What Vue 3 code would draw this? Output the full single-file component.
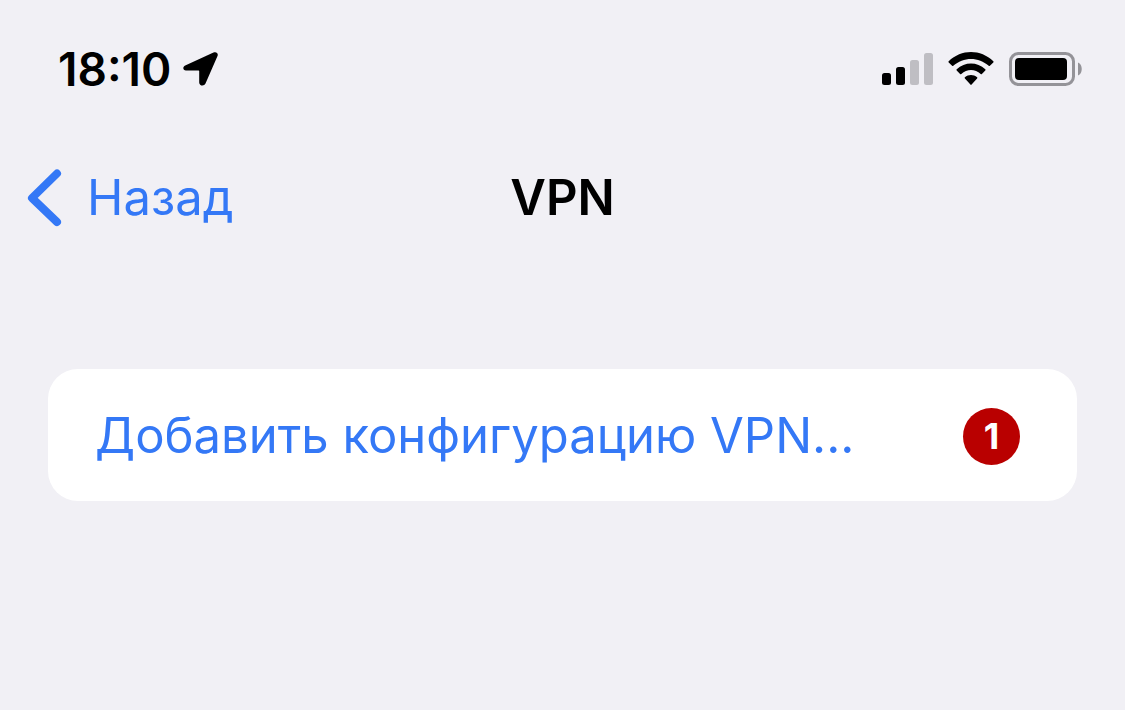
<script setup>
const bars = [
  { x: 0, y: 20, height: 12, on: true },
  { x: 14, y: 14, height: 18, on: true },
  { x: 28, y: 7, height: 25, on: false },
  { x: 42, y: 0, height: 32, on: false },
]
const configurations = [{ label: 'Добавить конфигурацию VPN...', badge: 1 }]
</script>

<template>
  <div class="screen">
    <div class="status">
      <div class="clock">
        <time>18:10</time>
        <svg class="location" width="36" height="36" viewBox="0 0 36 36" aria-hidden="true">
          <path d="M2.200 14.600 30.500 1.500c2.700-1.200 5.100.8 4 3.500L22.500 32.600c-1.300 3-6.300 2.500-6.300-1.200V20q0-.6-.6-.6H3C-.2 19.400-.6 15.900 2.200 14.600Z" />
        </svg>
      </div>
      <div class="indicators">
        <svg width="51" height="36" viewBox="0 -2 51 36" aria-hidden="true">
          <rect
            v-for="bar in bars"
            :key="bar.x"
            :class="{ dim: !bar.on }"
            :x="bar.x"
            :y="bar.y"
            width="9"
            :height="bar.height"
            rx="2.500"
          />
        </svg>
        <svg width="46" height="36" viewBox="0 0 46 36" aria-hidden="true">
          <path d="M.7 10.200C13.200-2.200 32.800-2.200 45.300 10.200q.6.600 0 1.200l-3.400 3.400q-.6.600-1.200 0C30.700 5.600 15.300 5.600 5.300 14.800q-.6.600-1.200 0L.7 11.400q-.6-.6 0-1.200Z" />
          <path d="M8.700 18.300C16.800 10.500 29.200 10.500 37.300 18.300q.6.600 0 1.200l-3.400 3.400q-.6.600-1.200 0C27 17.700 19 17.700 13.300 22.900q-.6.600-1.200 0l-3.400-3.400q-.6-.6 0-1.200Z" />
          <path d="M16.900 26.200C20.400 23.100 25.600 23.100 29.100 26.200q.6.600 0 1.200L23.600 33.600q-.6.600-1.200 0L16.900 27.400q-.6-.6 0-1.200Z" />
        </svg>
        <svg width="74" height="36" viewBox="0 0 74 36" aria-hidden="true">
          <rect class="shell" x="1.500" y="2.500" width="63" height="31" rx="8" />
          <rect x="6" y="7" width="52" height="22" rx="4" />
          <path class="cap" d="M69 11.500c5 2 5 11 0 13Z" />
        </svg>
      </div>
    </div>

    <header class="navbar">
      <a class="back" href="#">
        <svg width="36" height="58" viewBox="0 0 36 58" aria-hidden="true">
          <path d="M31 4.500 6 29l25 24" />
        </svg>
        <span>Назад</span>
      </a>
      <h1>VPN</h1>
    </header>

    <main>
      <button v-for="item in configurations" :key="item.label" class="row" type="button">
        <span>{{ item.label }}</span>
        <span class="badge">{{ item.badge }}</span>
      </button>
    </main>
  </div>
</template>

<style>
body {
  margin: 0;
  background: #f1f0f5;
}
</style>

<style scoped>
.screen {
  min-height: 100vh;
  box-sizing: border-box;
  padding-top: 39px;
  background: #f1f0f5;
  color: #000;
  font-family: Inter, "Liberation Sans", sans-serif;
}
svg {
  display: block;
  flex: none;
}
.status {
  display: flex;
  align-items: center;
  justify-content: space-between;
  height: 60px;
  padding: 0 42px 0 58px;
}
.clock {
  display: flex;
  align-items: center;
  gap: 12px;
  font-size: 46px;
  line-height: 60px;
  font-weight: 600;
}
.indicators {
  display: flex;
  align-items: center;
  gap: 15px;
}
.dim {
  fill: #bfbec3;
}
.shell {
  fill: none;
  stroke: #949398;
  stroke-width: 3;
}
.cap {
  fill: #949398;
}
.navbar {
  display: grid;
  grid-template-columns: 1fr auto 1fr;
  align-items: center;
  height: 64px;
  margin-top: 67px;
  padding: 0 26px;
}
.back {
  display: flex;
  align-items: center;
  gap: 25px;
  color: #3478f6;
  font-size: 49px;
  line-height: 64px;
  text-decoration: none;
}
.back path {
  fill: none;
  stroke: currentColor;
  stroke-width: 8;
  stroke-linecap: round;
  stroke-linejoin: round;
}
h1 {
  margin: 0;
  font-size: 49px;
  line-height: 64px;
  font-weight: 600;
}
main {
  padding: 139px 48px 0;
}
.row {
  display: flex;
  align-items: center;
  justify-content: space-between;
  width: 100%;
  min-height: 132px;
  padding: 2px 57px 0 47px;
  border: 0;
  border-radius: 30px;
  background: #fff;
  color: #3478f6;
  font-family: inherit;
  font-size: 49px;
  line-height: 64px;
  text-align: left;
}
.badge {
  flex: none;
  width: 57px;
  height: 57px;
  border-radius: 50%;
  background: #b90000;
  color: #fff;
  font-size: 36px;
  line-height: 57px;
  font-weight: 700;
  text-align: center;
}
</style>
